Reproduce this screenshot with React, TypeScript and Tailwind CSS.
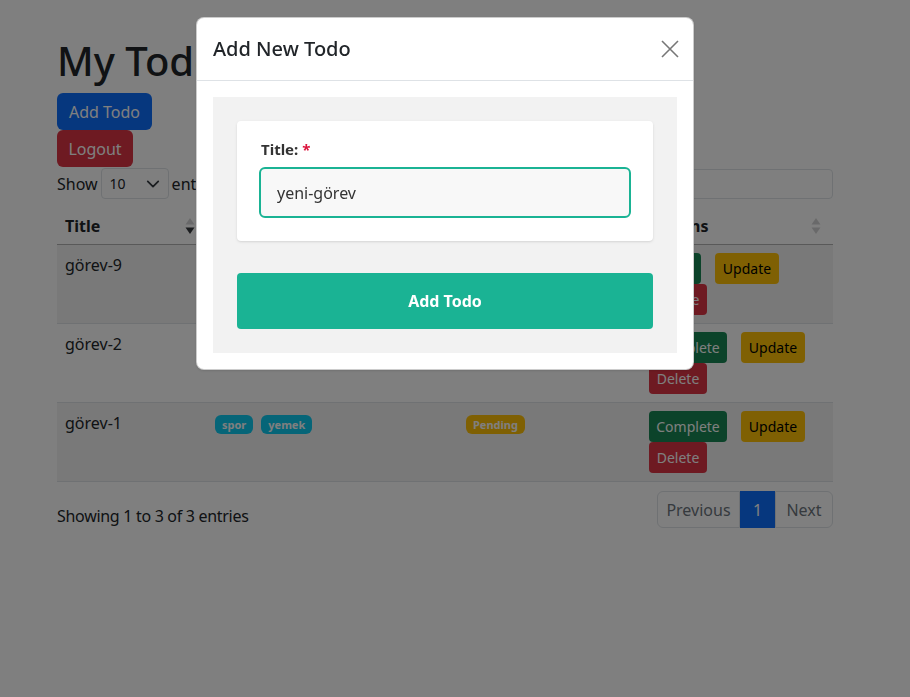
import React from "react";

type Todo = {
  title: string;
  tags: string[];
  status: string;
  done: boolean;
};

const todos: Todo[] = [
  { title: "görev-9", tags: [], status: "Completed", done: true },
  { title: "görev-2", tags: [], status: "Pending", done: false },
  { title: "görev-1", tags: ["spor", "yemek"], status: "Pending", done: false },
];

const SortIcon = ({ dir }: { dir?: "asc" | "desc" }) => (
  <svg width="10" height="18" viewBox="0 0 10 18" className="shrink-0">
    <path d="M5 1 L9.5 7.5 H0.5 Z" fill="#212529" opacity={dir === "asc" ? 0.9 : 0.2} />
    <path d="M5 17 L9.5 10.5 H0.5 Z" fill="#212529" opacity={dir === "desc" ? 0.9 : 0.2} />
  </svg>
);

const TodoRow = ({ todo, striped }: { todo: Todo; striped: boolean }) => (
  <tr className={`border-b border-[#dee2e6] align-top ${striped ? "bg-black/5" : ""}`}>
    <td className="px-2 py-2">{todo.title}</td>
    <td className="px-2 py-2">
      <div className="flex gap-2 mt-[4px]">
        {todo.tags.map((tag) => (
          <span key={tag} className="bg-[#0dcaf0] text-white text-[11px] font-bold leading-[19px] px-[7px] rounded-md">
            {tag}
          </span>
        ))}
      </div>
    </td>
    <td className="px-2 py-2">
      <span
        className={`inline-block mt-[4px] text-white text-[11px] font-bold leading-[19px] px-[7px] rounded-md ${
          todo.done ? "bg-[#198754]" : "bg-[#ffc107]"
        }`}
      >
        {todo.status}
      </span>
    </td>
    <td className="px-2 py-2">
      <div className="flex flex-wrap gap-x-[14px] text-[14px]">
        <button className={`h-[31px] rounded bg-[#198754] text-white ${todo.done ? "w-[52px]" : "w-[78px]"}`}>
          {todo.done ? "Undo" : "Complete"}
        </button>
        <button className="h-[31px] w-[64px] rounded bg-[#ffc107] text-black">Update</button>
        <button className="h-[31px] w-[58px] rounded bg-[#dc3545] text-white">Delete</button>
      </div>
    </td>
  </tr>
);

export default function App() {
  return (
    <div className="relative min-h-[697px] bg-white text-[#212529] font-['Noto_Sans',sans-serif] text-[16px] leading-6">
      <div className="w-[890px]">
        <div className="w-[776px] mx-auto pt-[37px]">
          <h1 className="text-[40px] leading-[48px] font-medium mb-2">My Todo List</h1>
          <div className="flex flex-col items-start">
            <button className="h-[37px] w-[95px] rounded-md bg-[#0d6efd] text-white">Add Todo</button>
            <button className="h-[37px] w-[76px] rounded-md bg-[#dc3545] text-white">Logout</button>
          </div>

          <div className="flex items-center justify-between mt-px">
            <div className="flex items-center gap-[3px]">
              <span>Show</span>
              <div className="w-[68px] h-[31px] border border-[#dee2e6] rounded flex items-center justify-between px-2 text-[14px]">
                <span>10</span>
                <svg width="14" height="14" viewBox="0 0 16 16" fill="none" stroke="#343a40" strokeWidth="2" strokeLinecap="round" strokeLinejoin="round">
                  <path d="M2 5l6 6 6-6" />
                </svg>
              </div>
              <span>entries</span>
            </div>
            <div className="flex items-center gap-2">
              <span>Search:</span>
              <div className="w-[200px] h-[30px] border border-[#dee2e6] rounded" />
            </div>
          </div>

          <table className="w-full table-fixed border-collapse mt-[9px]">
            <colgroup>
              <col className="w-[150px]" />
              <col className="w-[251px]" />
              <col className="w-[183px]" />
              <col className="w-[192px]" />
            </colgroup>
            <thead>
              <tr className="border-b border-black/30">
                {[
                  { label: "Title", dir: "desc" as const },
                  { label: "Tags" },
                  { label: "Status" },
                  { label: "Actions" },
                ].map((h) => (
                  <th key={h.label} className="pl-2 pr-[12px] py-[6px] text-left font-bold">
                    <div className="flex items-center justify-between">
                      <span>{h.label}</span>
                      <SortIcon dir={h.dir} />
                    </div>
                  </th>
                ))}
              </tr>
            </thead>
            <tbody>
              {todos.map((t, i) => (
                <TodoRow key={t.title} todo={t} striped={i % 2 === 0} />
              ))}
            </tbody>
          </table>

          <div className="flex justify-between items-start">
            <div className="mt-[22px] tracking-[-0.3px]">Showing 1 to 3 of 3 entries</div>
            <div className="flex mt-[9px] h-[37px]">
              <span className="w-[83px] flex items-center justify-center border border-[#dee2e6] rounded-l-md text-[#6c757d] bg-white">Previous</span>
              <span className="w-[35px] flex items-center justify-center bg-[#0d6efd] text-white">1</span>
              <span className="w-[58px] flex items-center justify-center border border-[#dee2e6] rounded-r-md text-[#6c757d] bg-white">Next</span>
            </div>
          </div>
        </div>
      </div>

      <div className="fixed inset-0 bg-black/50" />

      <div className="fixed top-[17px] left-[196px] w-[498px] bg-white rounded-lg border border-black/20 shadow">
        <div className="flex items-center justify-between pl-4 pr-[13px] py-4 border-b border-[#dee2e6]">
          <h5 className="text-[20px] leading-[30px] font-medium">Add New Todo</h5>
          <svg width="20" height="20" viewBox="0 0 20 20" stroke="#777" strokeWidth="1.6">
            <path d="M2 2 L18 18 M18 2 L2 18" />
          </svg>
        </div>
        <div className="p-4">
          <div className="bg-[#f2f2f2] p-6">
            <div className="bg-white rounded shadow-sm px-[22px] pt-4 pb-[23px]">
              <label className="block font-bold text-[#333] text-[15px] mb-[6px] pl-[2px]">
                Title: <span className="text-[#dc143c]">*</span>
              </label>
              <div className="h-[51px] border-2 border-[#1ab394] rounded-md bg-[#f8f8f8] px-4 flex items-center text-[#333]">
                yeni-görev
              </div>
            </div>
            <button className="mt-8 w-full h-[56px] rounded bg-[#1ab394] text-white font-bold">Add Todo</button>
          </div>
        </div>
      </div>
    </div>
  );
}
